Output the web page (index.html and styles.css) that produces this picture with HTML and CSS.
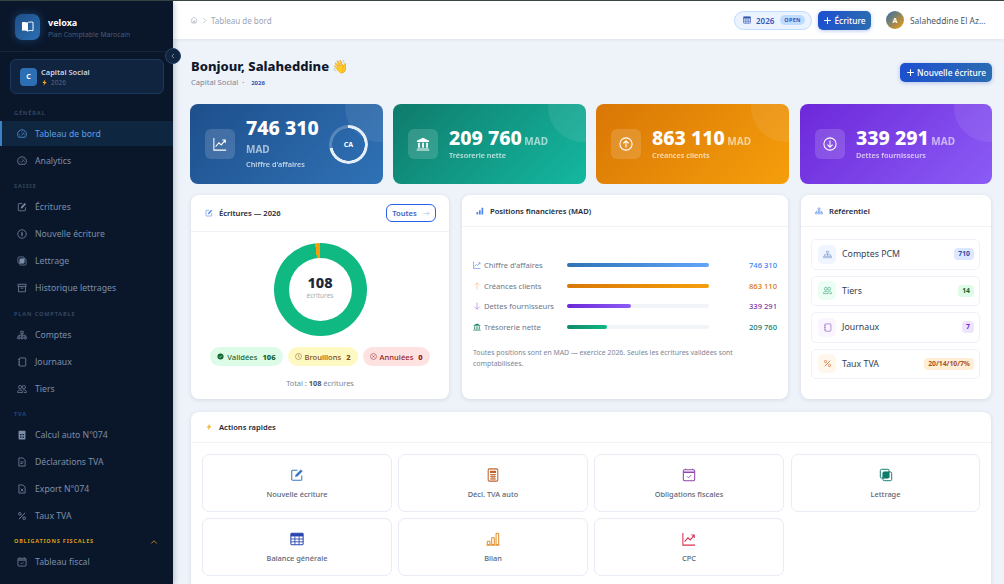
FILE: index.html
```html
<!DOCTYPE html>
<html lang="fr">
<head>
    <meta charset="UTF-8">
    <meta name="viewport" content="width=device-width, initial-scale=1.0">
    <link rel="stylesheet" href="styles.css">
    <title>veloxa - Tableau de bord</title>
</head>
<body>

    <!-- Icon set -->
    <svg class="icon-defs" aria-hidden="true">
        <symbol id="i-book" viewBox="0 0 16 16"><path d="M8 3.4C6.4 2.4 4 2.2 1.2 2.8v10.4c2.8-.6 5.2-.4 6.8.6z" fill="currentColor"/><path d="M8 3.4c1.6-1 4-1.2 6.8-.6v10.4c-2.8-.6-5.2-.4-6.8.6z" fill="none" stroke="currentColor" stroke-width="1.2"/></symbol>
        <symbol id="i-gauge" viewBox="0 0 16 16"><path d="M3 13.2a7 7 0 1 1 10 0z" fill="none" stroke="currentColor" stroke-width="1.2"/><path d="M7.4 10.2 11.2 5.6" stroke="currentColor" stroke-width="1.2"/><path d="M3.5 9.2h1.6M8 4v1.5M11.4 9.2h1.2" stroke="currentColor"/></symbol>
        <symbol id="i-pencil" viewBox="0 0 16 16"><path d="M13.5 8.5V13a1 1 0 0 1-1 1H3a1 1 0 0 1-1-1V3.5a1 1 0 0 1 1-1h5.5" fill="none" stroke="currentColor" stroke-width="1.2"/><path d="M5.8 10.4l.6-2.6 6-6.2 2 2-6 6.2z" fill="currentColor"/></symbol>
        <symbol id="i-plus-circle" viewBox="0 0 16 16"><circle cx="8" cy="8" r="6.8" fill="none" stroke="currentColor" stroke-width="1.2"/><path d="M8 4.5v7" stroke="currentColor" stroke-width="1.6"/><path d="M6.5 8h3" stroke="currentColor" stroke-width=".7"/></symbol>
        <symbol id="i-subtract" viewBox="0 0 16 16"><rect x="1.5" y="1.5" width="10" height="10" rx="1.5" fill="none" stroke="currentColor" stroke-width="1.1"/><rect x="4.5" y="4.5" width="10" height="10" rx="1.5" fill="none" stroke="currentColor" stroke-width="1.1"/><rect x="4.5" y="4.5" width="7" height="7" fill="currentColor"/></symbol>
        <symbol id="i-archive" viewBox="0 0 16 16"><path d="M1.5 2h13v3.4h-13zM2.5 5.4V14h11V5.4M6 8.2h4" fill="none" stroke="currentColor" stroke-width="1.2"/></symbol>
        <symbol id="i-diagram" viewBox="0 0 16 16"><path d="M6 2h4v3.4H6zM1 11h3.4v3H1zM6.3 11h3.4v3H6.3zM11.6 11H15v3h-3.4zM8 5.4V11M2.7 11V8.3h10.6V11" fill="none" stroke="currentColor" stroke-width="1.1"/></symbol>
        <symbol id="i-journal" viewBox="0 0 16 16"><rect x="3.5" y="1.5" width="10.5" height="13" rx="1.4" fill="none" stroke="currentColor" stroke-width="1.2"/><path d="M2 4h2.5M2 8h2.5M2 12h2.5" stroke="currentColor" stroke-width="1.1"/></symbol>
        <symbol id="i-people" viewBox="0 0 16 16"><circle cx="5" cy="5" r="2.6" fill="none" stroke="currentColor" stroke-width="1.1"/><circle cx="11" cy="5" r="2.6" fill="none" stroke="currentColor" stroke-width="1.1"/><path d="M.9 13.5c0-3 1.8-4 4.1-4s4.1 1 4.1 4zM9.4 9.6c3.2-.6 5.7.5 5.7 3.9h-4" fill="none" stroke="currentColor" stroke-width="1.1"/></symbol>
        <symbol id="i-calc" viewBox="0 0 16 16"><path fill-rule="evenodd" d="M3.5 1h9a1 1 0 0 1 1 1v12a1 1 0 0 1-1 1h-9a1 1 0 0 1-1-1V2a1 1 0 0 1 1-1zM4.7 6.5v1.3h1.6V6.5zm2.5 0v1.3h1.6V6.5zm2.5 0v1.3h1.6V6.5zM4.7 9v1.3h1.6V9zm2.5 0v1.3h1.6V9zm2.5 0v1.3h1.6V9zm-5 2.5v1.3h1.6v-1.3zm2.5 0v1.3h1.6v-1.3zm2.5 0v1.3h1.6v-1.3z" fill="currentColor"/></symbol>
        <symbol id="i-calc-line" viewBox="0 0 16 16"><rect x="2.5" y="1" width="11" height="14" rx="1.4" fill="none" stroke="currentColor" stroke-width="1.2"/><path d="M4.5 3h7v2.6h-7z" fill="currentColor"/><path d="M4.5 7.6h7M4.5 10h7M4.5 12.6h7M6.8 7v6.2M9.2 7v6.2" stroke="currentColor"/></symbol>
        <symbol id="i-file" viewBox="0 0 16 16"><path d="M3 1.5h6.5L13 5v9.5H3zM5.5 8h5M5.5 10.5h3.5" fill="none" stroke="currentColor" stroke-width="1.2"/></symbol>
        <symbol id="i-file-x" viewBox="0 0 16 16"><path d="M3 1.5h6.5L13 5v9.5H3zM6 7.5l4 4.5M10 7.5l-4 4.5" fill="none" stroke="currentColor" stroke-width="1.2"/></symbol>
        <symbol id="i-percent" viewBox="0 0 16 16"><path d="M13 3 3 13" stroke="currentColor" stroke-width="1.4"/><circle cx="4.5" cy="4.5" r="2.1" fill="none" stroke="currentColor" stroke-width="1.3"/><circle cx="11.5" cy="11.5" r="2.1" fill="none" stroke="currentColor" stroke-width="1.3"/></symbol>
        <symbol id="i-cal-check" viewBox="0 0 16 16"><rect x="1.5" y="2" width="13" height="12.5" rx="1.4" fill="none" stroke="currentColor" stroke-width="1.2"/><path d="M2 4h12v1.6H2z" fill="currentColor"/><path d="M4 .8V2M12 .8V2" stroke="currentColor"/><path d="M5.8 9.6l1.6 1.6 3-3" fill="none" stroke="currentColor"/></symbol>
        <symbol id="i-home" viewBox="0 0 16 16"><path d="M1.5 8.2 8 2l6.5 6.2M3.5 7v7h9V7M6.5 14v-4h3v4" fill="none" stroke="currentColor" stroke-width="1.1"/></symbol>
        <symbol id="i-graph" viewBox="0 0 16 16"><path d="M1 1v14h14" fill="none" stroke="currentColor" stroke-width="1.2"/><path d="M3 11l3.8-4.4 2.6 2.4L14 3.6M10.6 3.4H14v3.4" fill="none" stroke="currentColor" stroke-width="1.2"/></symbol>
        <symbol id="i-bank" viewBox="0 0 16 16"><path d="M8 .8 15 4.4v1.2H1V4.4zM2.4 6.6h2v5.6h-2zM7 6.6h2v5.6H7zM11.6 6.6h2v5.6h-2zM1.4 13h13.2v1H1.4zM.6 14.6h14.8v.8H.6z" fill="currentColor"/></symbol>
        <symbol id="i-up-circle" viewBox="0 0 16 16"><circle cx="8" cy="8" r="7" fill="none" stroke="currentColor" stroke-width="1.2"/><path d="M8 12V4.6M5 7.4l3-3 3 3" fill="none" stroke="currentColor" stroke-width="1.2"/></symbol>
        <symbol id="i-down-circle" viewBox="0 0 16 16"><circle cx="8" cy="8" r="7" fill="none" stroke="currentColor" stroke-width="1.2"/><path d="M8 4v7.4M5 8.6l3 3 3-3" fill="none" stroke="currentColor" stroke-width="1.2"/></symbol>
        <symbol id="i-bolt" viewBox="0 0 16 16"><path d="M10.4.8 3 9h4.4L5.6 15.2 13 6.6H8.4z" fill="currentColor"/></symbol>
        <symbol id="i-bars" viewBox="0 0 16 16"><path d="M1 10h3.4v5H1zM6 6.5h3.4V15H6zM11 1.5h3.4V15H11z" fill="currentColor"/></symbol>
        <symbol id="i-bars-line" viewBox="0 0 16 16"><path d="M1.5 10.5h3v4h-3zM6.5 6.5h3v8h-3zM11.5 1.5h3v13h-3zM.5 15h15" fill="none" stroke="currentColor" stroke-width="1.1"/></symbol>
        <symbol id="i-table" viewBox="0 0 16 16"><rect x="1" y="1.5" width="14" height="13" rx="1" fill="none" stroke="currentColor" stroke-width="1.2"/><path d="M1 1.5h14v3.6H1z" fill="currentColor"/><path d="M1 8h14M1 11.2h14M5.6 5v9.5M10.4 5v9.5" stroke="currentColor"/></symbol>
        <symbol id="i-check-fill" viewBox="0 0 16 16"><circle cx="8" cy="8" r="7" fill="currentColor"/><path d="M4.8 8.2l2.2 2.2 4.2-4.6" fill="none" stroke="#dcfce7" stroke-width="1.5"/></symbol>
        <symbol id="i-clock" viewBox="0 0 16 16"><circle cx="8" cy="8" r="6.8" fill="none" stroke="currentColor" stroke-width="1.1"/><path d="M8 3.8V8.4l3 1.7" fill="none" stroke="currentColor" stroke-width="1.1"/></symbol>
        <symbol id="i-x-circle" viewBox="0 0 16 16"><circle cx="8" cy="8" r="6.8" fill="none" stroke="currentColor" stroke-width="1.1"/><path d="M5.2 5.2l5.6 5.6M10.8 5.2l-5.6 5.6" stroke="currentColor" stroke-width="1.1"/></symbol>
        <symbol id="i-arrow-right" viewBox="0 0 16 16"><path d="M1.5 8h12.5M9.5 3.5 14 8l-4.5 4.5" fill="none" stroke="currentColor" stroke-width="1.3"/></symbol>
        <symbol id="i-arrow-up" viewBox="0 0 16 16"><path d="M8 15V1.8M3 6.5l5-5 5 5" fill="none" stroke="currentColor" stroke-width="1.2"/></symbol>
        <symbol id="i-arrow-down" viewBox="0 0 16 16"><path d="M8 1v13.2M3 9.5l5 5 5-5" fill="none" stroke="currentColor" stroke-width="1.2"/></symbol>
        <symbol id="i-chev-left" viewBox="0 0 16 16"><path d="M10.5 2.5 5 8l5.5 5.5" fill="none" stroke="currentColor" stroke-width="2"/></symbol>
        <symbol id="i-chev-right" viewBox="0 0 16 16"><path d="M5.5 2.5 11 8l-5.5 5.5" fill="none" stroke="currentColor" stroke-width="1.4"/></symbol>
        <symbol id="i-chev-up" viewBox="0 0 16 16"><path d="M2.5 11 8 5.5l5.5 5.5" fill="none" stroke="currentColor" stroke-width="1.6"/></symbol>
        <symbol id="i-plus" viewBox="0 0 16 16"><path d="M8 2v12M2 8h12" fill="none" stroke="currentColor" stroke-width="1.8"/></symbol>
    </svg>

    <div class="app">

        <!-- Sidebar -->
        <aside class="sidebar">
            <div class="brand">
                <div class="brand-logo"><svg class="ico"><use href="#i-book"/></svg></div>
                <div class="brand-text">
                    <div class="brand-name">veloxa</div>
                    <div class="brand-sub">Plan Comptable Marocain</div>
                </div>
            </div>

            <div class="company">
                <div class="company-avatar">C</div>
                <div>
                    <div class="company-name">Capital Social</div>
                    <div class="company-year"><svg class="ico bolt"><use href="#i-bolt"/></svg> 2026</div>
                </div>
            </div>

            <div class="nav-label">GÉNÉRAL</div>
            <a class="nav-item active"><svg class="ico"><use href="#i-gauge"/></svg>Tableau de bord</a>
            <a class="nav-item"><svg class="ico"><use href="#i-gauge"/></svg>Analytics</a>

            <div class="nav-label">SAISIE</div>
            <a class="nav-item"><svg class="ico"><use href="#i-pencil"/></svg>Écritures</a>
            <a class="nav-item"><svg class="ico"><use href="#i-plus-circle"/></svg>Nouvelle écriture</a>
            <a class="nav-item"><svg class="ico"><use href="#i-subtract"/></svg>Lettrage</a>
            <a class="nav-item"><svg class="ico"><use href="#i-archive"/></svg>Historique lettrages</a>

            <div class="nav-label plan">PLAN COMPTABLE</div>
            <a class="nav-item"><svg class="ico"><use href="#i-diagram"/></svg>Comptes</a>
            <a class="nav-item"><svg class="ico"><use href="#i-journal"/></svg>Journaux</a>
            <a class="nav-item"><svg class="ico"><use href="#i-people"/></svg>Tiers</a>

            <div class="nav-label tva">TVA</div>
            <a class="nav-item"><svg class="ico"><use href="#i-calc"/></svg>Calcul auto N°074</a>
            <a class="nav-item"><svg class="ico"><use href="#i-file"/></svg>Déclarations TVA</a>
            <a class="nav-item"><svg class="ico"><use href="#i-file-x"/></svg>Export N°074</a>
            <a class="nav-item"><svg class="ico"><use href="#i-percent"/></svg>Taux TVA</a>

            <div class="nav-label fiscal">OBLIGATIONS FISCALES <svg class="ico"><use href="#i-chev-up"/></svg></div>
            <a class="nav-item"><svg class="ico"><use href="#i-cal-check"/></svg>Tableau fiscal</a>
        </aside>

        <button class="collapse-btn"><svg class="ico"><use href="#i-chev-left"/></svg></button>

        <div class="main">

            <!-- Top bar -->
            <header class="topbar">
                <div class="crumbs">
                    <svg class="ico"><use href="#i-home"/></svg>
                    <svg class="ico chev"><use href="#i-chev-right"/></svg>
                    <span>Tableau de bord</span>
                </div>
                <div class="top-right">
                    <div class="year-pill">
                        <svg class="ico"><use href="#i-table"/></svg>
                        <span>2026</span>
                        <span class="open-badge">OPEN</span>
                    </div>
                    <button class="btn btn-top"><svg class="ico"><use href="#i-plus"/></svg>Écriture</button>
                    <div class="user">
                        <div class="user-avatar">A</div>
                        <span>Salaheddine El Az...</span>
                    </div>
                </div>
            </header>

            <main class="content">

                <div class="page-head">
                    <div>
                        <h1>Bonjour, Salaheddine 👋</h1>
                        <div class="page-sub">Capital Social &nbsp;·&nbsp; <span class="page-year">2026</span></div>
                    </div>
                    <button class="btn btn-new"><svg class="ico"><use href="#i-plus"/></svg>Nouvelle écriture</button>
                </div>

                <!-- Stat cards -->
                <section class="stats">
                    <div class="stat stat-blue">
                        <div class="stat-icon"><svg class="ico"><use href="#i-graph"/></svg></div>
                        <div class="stat-body">
                            <div class="stat-value">746&nbsp;310<small> MAD</small></div>
                            <div class="stat-label">Chiffre d'affaires</div>
                        </div>
                        <div class="ring"><span>CA</span></div>
                    </div>
                    <div class="stat stat-teal">
                        <div class="stat-icon"><svg class="ico"><use href="#i-bank"/></svg></div>
                        <div class="stat-body">
                            <div class="stat-value">209&nbsp;760<small> MAD</small></div>
                            <div class="stat-label">Trésorerie nette</div>
                        </div>
                    </div>
                    <div class="stat stat-orange">
                        <div class="stat-icon"><svg class="ico"><use href="#i-up-circle"/></svg></div>
                        <div class="stat-body">
                            <div class="stat-value">863&nbsp;110<small> MAD</small></div>
                            <div class="stat-label">Créances clients</div>
                        </div>
                    </div>
                    <div class="stat stat-purple">
                        <div class="stat-icon"><svg class="ico"><use href="#i-down-circle"/></svg></div>
                        <div class="stat-body">
                            <div class="stat-value">339&nbsp;291<small> MAD</small></div>
                            <div class="stat-label">Dettes fournisseurs</div>
                        </div>
                    </div>
                </section>

                <!-- Middle row -->
                <section class="panels">
                    <div class="card">
                        <div class="card-head head-tall">
                            <div class="card-title"><svg class="ico c-blue"><use href="#i-pencil"/></svg>Écritures — 2026</div>
                            <button class="btn-outline">Toutes <svg class="ico"><use href="#i-arrow-right"/></svg></button>
                        </div>
                        <div class="donut-body">
                            <div class="donut">
                                <div class="donut-hole">
                                    <strong>108</strong>
                                    <span>écritures</span>
                                </div>
                            </div>
                            <div class="pills">
                                <span class="pill pill-green"><svg class="ico"><use href="#i-check-fill"/></svg>Validées <b>106</b></span>
                                <span class="pill pill-yellow"><svg class="ico"><use href="#i-clock"/></svg>Brouillons <b>2</b></span>
                                <span class="pill pill-red"><svg class="ico"><use href="#i-x-circle"/></svg>Annulées <b>0</b></span>
                            </div>
                            <div class="total">Total : <b>108</b> écritures</div>
                        </div>
                    </div>

                    <div class="card">
                        <div class="card-head">
                            <div class="card-title"><svg class="ico c-blue"><use href="#i-bars"/></svg>Positions financières (MAD)</div>
                        </div>
                        <div class="positions">
                            <div class="pos-row">
                                <span class="pos-name"><svg class="ico c-blue"><use href="#i-graph"/></svg>Chiffre d'affaires</span>
                                <div class="pos-track"><div class="pos-fill fill-blue" style="width:100%"></div></div>
                                <span class="pos-value v-blue">746 310</span>
                            </div>
                            <div class="pos-row">
                                <span class="pos-name"><svg class="ico c-orange"><use href="#i-arrow-up"/></svg>Créances clients</span>
                                <div class="pos-track"><div class="pos-fill fill-orange" style="width:100%"></div></div>
                                <span class="pos-value v-orange">863 110</span>
                            </div>
                            <div class="pos-row">
                                <span class="pos-name"><svg class="ico c-purple"><use href="#i-arrow-down"/></svg>Dettes fournisseurs</span>
                                <div class="pos-track"><div class="pos-fill fill-purple" style="width:45%"></div></div>
                                <span class="pos-value v-purple">339 291</span>
                            </div>
                            <div class="pos-row">
                                <span class="pos-name"><svg class="ico c-teal"><use href="#i-bank"/></svg>Trésorerie nette</span>
                                <div class="pos-track"><div class="pos-fill fill-green" style="width:28%"></div></div>
                                <span class="pos-value v-teal">209 760</span>
                            </div>
                            <p class="pos-note">Toutes positions sont en MAD — exercice 2026. Seules les écritures validées sont comptabilisées.</p>
                        </div>
                    </div>

                    <div class="card">
                        <div class="card-head">
                            <div class="card-title"><svg class="ico c-blue"><use href="#i-diagram"/></svg>Référentiel</div>
                        </div>
                        <div class="refs">
                            <div class="ref-row">
                                <span class="ref-icon ri-blue"><svg class="ico"><use href="#i-diagram"/></svg></span>
                                <span class="ref-name">Comptes PCM</span>
                                <span class="ref-badge rb-blue">710</span>
                            </div>
                            <div class="ref-row">
                                <span class="ref-icon ri-green"><svg class="ico"><use href="#i-people"/></svg></span>
                                <span class="ref-name">Tiers</span>
                                <span class="ref-badge rb-green">14</span>
                            </div>
                            <div class="ref-row">
                                <span class="ref-icon ri-purple"><svg class="ico"><use href="#i-journal"/></svg></span>
                                <span class="ref-name">Journaux</span>
                                <span class="ref-badge rb-purple">7</span>
                            </div>
                            <div class="ref-row">
                                <span class="ref-icon ri-orange"><svg class="ico"><use href="#i-percent"/></svg></span>
                                <span class="ref-name">Taux TVA</span>
                                <span class="ref-badge rb-orange">20/14/10/7%</span>
                            </div>
                        </div>
                    </div>
                </section>

                <!-- Quick actions -->
                <section class="card actions-card">
                    <div class="card-head">
                        <div class="card-title"><svg class="ico c-amber"><use href="#i-bolt"/></svg>Actions rapides</div>
                    </div>
                    <div class="actions">
                        <a class="action"><svg class="ico a-blue"><use href="#i-pencil"/></svg>Nouvelle écriture</a>
                        <a class="action"><svg class="ico a-rust"><use href="#i-calc-line"/></svg>Décl. TVA auto</a>
                        <a class="action"><svg class="ico a-purple"><use href="#i-cal-check"/></svg>Obligations fiscales</a>
                        <a class="action"><svg class="ico a-teal"><use href="#i-subtract"/></svg>Lettrage</a>
                        <a class="action"><svg class="ico a-navy"><use href="#i-table"/></svg>Balance générale</a>
                        <a class="action"><svg class="ico a-orange"><use href="#i-bars-line"/></svg>Bilan</a>
                        <a class="action"><svg class="ico a-red"><use href="#i-graph"/></svg>CPC</a>
                    </div>
                </section>

            </main>
        </div>
    </div>

</body>
</html>
```

FILE: styles.css
```css
* {
    box-sizing: border-box;
}

html, body {
    margin: 0;
    height: 100%;
    overflow: hidden;
}

body {
    font-family: "Noto Sans", "Open Sans", sans-serif;
    color: #1e293b;
    background: #eef2f9;
}

.icon-defs {
    display: none;
}

.ico {
    display: block;
    flex: none;
    width: 14px;
    height: 14px;
}

.app {
    position: relative;
    display: flex;
    height: 100vh;
    border-top: 1px solid #3b4744;
}

/* Sidebar */
.sidebar {
    flex: none;
    width: 173px;
    overflow: hidden;
    background: #0a172b;
    color: #8a9bb4;
    box-shadow: 1px 0 6px rgba(15, 30, 60, 0.25);
    z-index: 2;
}

.brand {
    display: flex;
    align-items: center;
    gap: 8px;
    height: 51px;
    padding-left: 15px;
    border-bottom: 1px solid #15243a;
}

.brand-logo {
    display: flex;
    align-items: center;
    justify-content: center;
    width: 25px;
    height: 26px;
    margin-top: 1px;
    border-radius: 7px;
    background: linear-gradient(135deg, #1d4f86, #2c6fb5);
    color: #fff;
    box-shadow: 0 0 8px rgba(44, 111, 181, 0.45);
}

.brand-logo .ico {
    width: 13px;
    height: 13px;
}

.brand-text {
    margin-top: 4px;
}

.brand-name {
    font-size: 9px;
    line-height: 12px;
    font-weight: 700;
    color: #fff;
}

.brand-sub {
    margin-top: 1px;
    font-size: 6.8px;
    line-height: 9px;
    color: #4b5b73;
}

.company {
    display: flex;
    align-items: center;
    gap: 4px;
    height: 35px;
    margin: 7px 9px 8px 10px;
    padding-left: 9px;
    border: 1px solid #1b395c;
    border-radius: 6px;
    background: #10233f;
}

.company-avatar {
    display: flex;
    align-items: center;
    justify-content: center;
    width: 17px;
    height: 18px;
    border-radius: 4px;
    background: #2c6fb5;
    color: #fff;
    font-size: 7px;
    font-weight: 700;
}

.company-name {
    font-size: 7.5px;
    line-height: 10px;
    font-weight: 600;
    color: #c9d4e3;
}

.company-year {
    display: flex;
    align-items: center;
    gap: 3px;
    margin-top: 1px;
    font-size: 6.5px;
    line-height: 9px;
    color: #56677f;
}

.company-year .bolt {
    width: 7px;
    height: 7px;
    color: #f5a623;
}

.nav-label {
    display: flex;
    justify-content: space-between;
    align-items: center;
    padding: 7px 14px 3px;
    font-size: 5.5px;
    line-height: 9px;
    font-weight: 700;
    letter-spacing: 0.9px;
    color: #33465f;
}

.nav-label.plan {
    padding-top: 8px;
}

.nav-label.tva {
    color: #1f4a7d;
}

.nav-label.fiscal {
    color: #d99a14;
    letter-spacing: 0.8px;
}

.nav-label .ico {
    width: 8px;
    height: 8px;
    margin-right: 1px;
}

.nav-item {
    display: flex;
    align-items: center;
    gap: 8px;
    height: 25px;
    margin-bottom: 2px;
    padding-left: 15px;
    border-left: 2px solid transparent;
    font-size: 8.7px;
    color: #7d8ea8;
}

.nav-item .ico {
    width: 10px;
    height: 10px;
}

.nav-item.active {
    border-left-color: #3b82c4;
    background: #0f2641;
    color: #5b9ee8;
}

.collapse-btn {
    position: absolute;
    top: 47px;
    left: 165px;
    z-index: 3;
    display: flex;
    align-items: center;
    justify-content: center;
    width: 16px;
    height: 16px;
    padding: 0;
    border: 1px solid #26456b;
    border-radius: 50%;
    background: #10233f;
    color: #9fb1c9;
}

.collapse-btn .ico {
    width: 6px;
    height: 6px;
}

/* Main */
.main {
    flex: 1;
    min-width: 0;
    display: flex;
    flex-direction: column;
}

.topbar {
    flex: none;
    display: flex;
    align-items: center;
    justify-content: space-between;
    height: 38px;
    padding: 0 19px 0 17px;
    background: #fff;
    box-shadow: 0 1px 3px rgba(30, 50, 90, 0.07);
}

.crumbs {
    display: flex;
    align-items: center;
    gap: 3px;
    font-size: 8px;
    color: #9aa4b6;
}

.crumbs .ico {
    width: 8px;
    height: 8px;
}

.crumbs .chev {
    width: 7px;
    height: 7px;
}

.top-right {
    display: flex;
    align-items: center;
}

.year-pill {
    display: flex;
    align-items: center;
    gap: 5px;
    width: 78px;
    height: 19px;
    padding-left: 8px;
    border: 1px solid #bfdbfe;
    border-radius: 10px;
    background: #eaf3ff;
    color: #3656b4;
    font-size: 8px;
    font-weight: 600;
}

.year-pill .ico {
    width: 8px;
    height: 8px;
}

.open-badge {
    padding: 0 4px;
    margin-left: 1px;
    border-radius: 5px;
    background: #bfdbfe;
    font-size: 5.5px;
    line-height: 10px;
    font-weight: 700;
    letter-spacing: 0.3px;
}

.btn {
    display: flex;
    align-items: center;
    justify-content: center;
    height: 19px;
    padding: 0;
    border: 0;
    border-radius: 5px;
    background: linear-gradient(100deg, #1d4fd0, #2b6cb0);
    color: #fff;
    font-family: inherit;
    font-size: 8.4px;
    font-weight: 500;
    box-shadow: 0 1px 4px rgba(29, 78, 208, 0.3);
}

.btn .ico {
    width: 9px;
    height: 9px;
    margin-right: 2px;
}

.btn-top {
    width: 53px;
    margin-left: 6px;
}

.user {
    display: flex;
    align-items: center;
    gap: 6px;
    margin-left: 15px;
    width: 99px;
    font-size: 8.4px;
    color: #4b5563;
    white-space: nowrap;
}

.user-avatar {
    display: flex;
    align-items: center;
    justify-content: center;
    flex: none;
    width: 18px;
    height: 18px;
    border-radius: 50%;
    background: linear-gradient(135deg, #2b6cb0, #f59e0b);
    color: #fff;
    font-size: 7px;
    font-weight: 700;
}

.content {
    flex: 1;
    overflow: hidden;
    padding: 19px 12px 0 17px;
}

.page-head {
    display: flex;
    align-items: flex-start;
    justify-content: space-between;
    height: 46px;
}

h1 {
    margin: 0 0 0 1px;
    font-size: 13px;
    line-height: 16px;
    font-weight: 800;
    color: #0f172a;
}

.page-sub {
    margin: 3px 0 0 1px;
    font-size: 7.6px;
    line-height: 11px;
    color: #7a8496;
}

.page-year {
    padding: 0 3px;
    font-size: 6px;
    font-weight: 700;
    color: #3656b4;
}

.btn-new {
    width: 92px;
    margin-top: 5px;
}

/* Stat cards */
.stats {
    display: grid;
    grid-template-columns: repeat(4, 1fr);
    gap: 10px;
}

.stat {
    position: relative;
    display: flex;
    align-items: center;
    gap: 11px;
    height: 80px;
    padding: 0 15px;
    overflow: hidden;
    border-radius: 8px;
    color: #fff;
}

.stat::after {
    content: "";
    position: absolute;
    top: -32px;
    right: -32px;
    width: 70px;
    height: 70px;
    border-radius: 50%;
    background: rgba(255, 255, 255, 0.08);
}

.stat-blue { background: linear-gradient(135deg, #1e4f8c, #2f72b6); }
.stat-teal { background: linear-gradient(135deg, #0f7b6c, #14b8a0); }
.stat-orange { background: linear-gradient(135deg, #d97706, #f59e0b); }
.stat-purple { background: linear-gradient(135deg, #6d28d9, #8b5cf6); margin-left: 1px; }

.stat-icon {
    flex: none;
    display: flex;
    align-items: center;
    justify-content: center;
    width: 30px;
    height: 30px;
    border-radius: 6px;
    background: rgba(255, 255, 255, 0.15);
}

.stat-body {
    flex: 1;
    min-width: 0;
    padding-bottom: 2px;
}

.stat-blue .stat-body {
    padding-bottom: 0;
}

.stat-value {
    font-size: 19.5px;
    line-height: 22px;
    font-weight: 800;
}

.stat-blue .stat-value {
    line-height: 18px;
}

.stat-value small {
    font-size: 10px;
    line-height: 1;
    font-weight: 700;
    opacity: 0.6;
}

.stat-label {
    margin-top: 1px;
    font-size: 7.3px;
    line-height: 10px;
    font-weight: 600;
    opacity: 0.7;
}

.stat-blue .stat-label {
    margin-top: 3.5px;
}

.ring {
    flex: none;
    position: relative;
    z-index: 1;
    display: flex;
    align-items: center;
    justify-content: center;
    width: 39px;
    height: 39px;
    font-size: 7px;
    font-weight: 700;
}

.ring::before {
    content: "";
    position: absolute;
    inset: 0;
    border-radius: 50%;
    background: conic-gradient(#e6eef8 0 72%, rgba(255, 255, 255, 0.22) 0);
    -webkit-mask: radial-gradient(circle, transparent 16px, #000 16.5px);
}

/* Panels */
.panels {
    display: grid;
    grid-template-columns: 258px 326px 190px;
    gap: 13px;
    height: 204px;
    margin: 11px 1px 13px;
}

.card {
    overflow: hidden;
    border-radius: 8px;
    background: #fff;
    box-shadow: 0 1px 4px rgba(30, 50, 90, 0.12);
}

.card-head {
    display: flex;
    align-items: center;
    justify-content: space-between;
    height: 32px;
    padding: 0 14px;
    border-bottom: 1px solid #f0f2f7;
}

.head-tall {
    height: 37px;
    padding-right: 13px;
}

.card-title {
    display: flex;
    align-items: center;
    gap: 6px;
    font-size: 7.6px;
    font-weight: 600;
    color: #1e293b;
}

.card-title .ico {
    width: 8px;
    height: 8px;
}

.c-blue { color: #4f86e8; }
.c-orange { color: #f9b26b; }
.c-purple { color: #a06ee0; }
.c-teal { color: #25896f; }
.c-amber { color: #f5b324; }

.btn-outline {
    display: flex;
    align-items: center;
    justify-content: center;
    gap: 6px;
    width: 50px;
    height: 18px;
    padding: 0;
    border: 1px solid #2563eb;
    border-radius: 6px;
    background: #fff;
    color: #3b5fc4;
    font-family: inherit;
    font-size: 7.6px;
    font-weight: 600;
}

.btn-outline .ico {
    width: 7px;
    height: 7px;
    color: #a5b8e0;
}

.donut-body {
    display: flex;
    flex-direction: column;
    align-items: center;
    padding-top: 11px;
}

.donut {
    display: flex;
    align-items: center;
    justify-content: center;
    width: 93px;
    height: 93px;
    border-radius: 50%;
    background: conic-gradient(#10b981 0 353.3deg, #f59e0b 0);
}

.donut-hole {
    display: flex;
    flex-direction: column;
    align-items: center;
    justify-content: center;
    width: 63px;
    height: 63px;
    padding-bottom: 5px;
    border-radius: 50%;
    background: #fff;
}

.donut-hole strong {
    font-size: 14.5px;
    line-height: 17px;
    font-weight: 800;
    color: #1e293b;
}

.donut-hole span {
    font-size: 6.5px;
    line-height: 9px;
    color: #a3adbd;
}

.pills {
    display: flex;
    gap: 5px;
    margin-top: 11px;
}

.pill {
    display: flex;
    align-items: center;
    gap: 3px;
    height: 19px;
    padding: 0 7px;
    border-radius: 10px;
    font-size: 7.6px;
    font-weight: 500;
    white-space: nowrap;
}

.pill b {
    margin-left: 2px;
    font-weight: 800;
}

.pill .ico {
    width: 7px;
    height: 7px;
}

.pill-green { background: #dcfce7; color: #166534; }
.pill-yellow { background: #fef9c3; color: #854d0e; }
.pill-red { background: #fee2e2; color: #991b1b; }

.total {
    margin-top: 12px;
    font-size: 7.4px;
    line-height: 10px;
    color: #7b8698;
}

.total b {
    color: #475569;
}

.positions {
    display: flex;
    flex-direction: column;
    justify-content: center;
    height: 172px;
    padding: 0 11px 2px;
}

.pos-row {
    display: flex;
    align-items: center;
    height: 20.6px;
    font-size: 7.6px;
    color: #6b7689;
}

.pos-name {
    display: flex;
    align-items: center;
    gap: 3px;
    width: 94px;
    white-space: nowrap;
}

.pos-name .ico {
    width: 8px;
    height: 8px;
}

.pos-track {
    width: 142px;
    height: 4px;
    border-radius: 2px;
    background: #f1f4f9;
}

.pos-fill {
    height: 100%;
    border-radius: 2px;
}

.fill-blue { background: linear-gradient(90deg, #2f72b6, #60a5fa); }
.fill-orange { background: linear-gradient(90deg, #d97706, #f59e0b); }
.fill-purple { background: linear-gradient(90deg, #6d28d9, #8b5cf6); }
.fill-green { background: linear-gradient(90deg, #0f8a6c, #10b981); }

.pos-value {
    flex: 1;
    text-align: right;
    font-weight: 500;
}

.v-blue { color: #3b82f6; }
.v-orange { color: #d97706; }
.v-purple { color: #7c3aa8; }
.v-teal { color: #0f7b6c; }

.pos-note {
    margin: 10px 0 0;
    font-size: 6.9px;
    line-height: 11px;
    color: #7b8698;
}

.refs {
    display: flex;
    flex-direction: column;
    gap: 6px;
    padding: 12px 11px 0 10px;
}

.ref-row {
    display: flex;
    align-items: center;
    height: 30.5px;
    padding: 0 5px 0 6px;
    border: 1px solid #eff2f8;
    border-radius: 5px;
}

.ref-icon {
    display: flex;
    align-items: center;
    justify-content: center;
    width: 18px;
    height: 19px;
    border-radius: 5px;
}

.ref-icon .ico {
    width: 9px;
    height: 9px;
}

.ri-blue { background: #eff6ff; color: #7f9bd0; }
.ri-green { background: #ecfdf3; color: #3fa67e; }
.ri-purple { background: #faf5ff; color: #8e63c2; }
.ri-orange { background: #fff6ec; color: #d9733a; }

.ref-name {
    flex: 1;
    margin-left: 6px;
    font-size: 8.8px;
    color: #334155;
}

.ref-badge {
    padding: 0 4px;
    border-radius: 4px;
    font-size: 6.8px;
    line-height: 12px;
    font-weight: 700;
}

.rb-blue { background: #dbe8ff; color: #2c4fa8; }
.rb-green { background: #dcfce7; color: #166534; }
.rb-purple { background: #ede4ff; color: #6d28d9; }
.rb-orange { background: #ffedd5; color: #a8542a; }

/* Quick actions */
.actions-card {
    margin: 0 1px;
    height: 190px;
}

.actions-card .card-head {
    height: 31px;
}

.actions {
    display: grid;
    grid-template-columns: repeat(4, 1fr);
    gap: 6px;
    padding: 11px 11px 0;
}

.action {
    display: flex;
    flex-direction: column;
    align-items: center;
    justify-content: center;
    gap: 7px;
    height: 58px;
    border: 1px solid #e8ecf4;
    border-radius: 7px;
    font-size: 7.4px;
    font-weight: 500;
    color: #5b6578;
}

.action:nth-child(4) {
    margin-left: 1px;
}

.a-blue { color: #3b78c4; }
.a-rust { color: #c2622a; }
.a-purple { color: #8e44ad; }
.a-teal { color: #0f7b6c; }
.a-navy { color: #2a47b0; }
.a-orange { color: #e08a1e; }
.a-red { color: #d9304f; }
```
